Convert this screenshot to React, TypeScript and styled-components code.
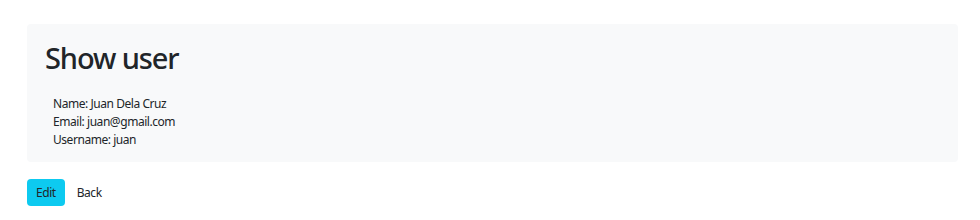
import React from "react";
import styled, { createGlobalStyle } from "styled-components";

const Global = createGlobalStyle`
  html, body { margin: 0; padding: 0; background: #ffffff; }
  body { font-family: "Noto Sans", "Open Sans", sans-serif; color: #212529; }
`;

const Page = styled.div`
  padding: 24px 22px 0 27px;
`;

const Panel = styled.section`
  background: #f8f9fa;
  border-radius: 4px;
  padding: 16px 18px 0 18px;
  height: 138px;
  box-sizing: border-box;
`;

const Title = styled.h1`
  margin: 0 0 19px 0;
  font-size: 29px;
  font-weight: 500;
  line-height: 36px;
  letter-spacing: -1.1px;
  color: #212529;
`;

const Details = styled.div`
  padding-left: 8px;
  display: flex;
  flex-direction: column;
`;

const Line = styled.div`
  font-size: 12px;
  line-height: 18px;
  letter-spacing: -0.45px;
  color: #212529;
`;

const Actions = styled.div`
  display: flex;
  align-items: center;
  gap: 12px;
  margin-top: 17px;
`;

const Button = styled.button<{ $variant?: "info" | "link" }>`
  font-family: inherit;
  font-size: 12px;
  line-height: 18px;
  letter-spacing: -0.45px;
  height: 27px;
  padding: 0 ${(p) => (p.$variant === "info" ? "9px" : "0")};
  border: none;
  border-radius: 4px;
  background: ${(p) => (p.$variant === "info" ? "#0dcaf0" : "transparent")};
  color: #212529;
  cursor: pointer;
`;

export default function App() {
  return (
    <>
      <Global />
      <Page>
        <Panel>
          <Title>Show user</Title>
          <Details>
            <Line>Name: Juan Dela Cruz</Line>
            <Line>Email: juan@gmail.com</Line>
            <Line>Username: juan</Line>
          </Details>
        </Panel>
        <Actions>
          <Button $variant="info">Edit</Button>
          <Button $variant="link">Back</Button>
        </Actions>
      </Page>
    </>
  );
}
